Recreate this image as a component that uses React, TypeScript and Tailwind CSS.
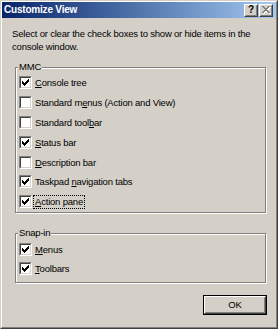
import React from "react";

const font = { fontFamily: '"Liberation Sans", Arial, sans-serif' };

function Check() {
  return (
    <svg width="7" height="7" viewBox="0 0 7 7" shapeRendering="crispEdges" className="block">
      <rect x="6" y="0" width="1" height="1" fill="#000" />
      <rect x="5" y="1" width="2" height="1" fill="#000" />
      <rect x="0" y="2" width="1" height="1" fill="#000" />
      <rect x="4" y="2" width="3" height="1" fill="#000" />
      <rect x="0" y="3" width="2" height="1" fill="#000" />
      <rect x="3" y="3" width="3" height="1" fill="#000" />
      <rect x="0" y="4" width="5" height="1" fill="#000" />
      <rect x="1" y="5" width="3" height="1" fill="#000" />
      <rect x="2" y="6" width="1" height="1" fill="#000" />
    </svg>
  );
}

function Box({ checked }: { checked: boolean }) {
  return (
    <div className="w-[13px] h-[13px] shrink-0 border border-t-[#808080] border-l-[#808080] border-b-white border-r-white">
      <div className="w-[11px] h-[11px] border border-t-[#404040] border-l-[#404040] border-b-[#d4d0c8] border-r-[#d4d0c8] bg-white p-px">
        {checked && <Check />}
      </div>
    </div>
  );
}

type Item = { pre: string; u: string; post: string; checked: boolean; focus?: boolean; mb: number };

function Row({ it }: { it: Item }) {
  return (
    <div className="flex items-center h-[13px]" style={{ marginBottom: it.mb }}>
      <Box checked={it.checked} />
      <span
        className={
          "ml-px px-px inline-block h-[14px] leading-[12px] whitespace-pre text-[9.5px] tracking-[-0.2px] text-black border " +
          (it.focus ? "border-dotted border-black" : "border-transparent")
        }
      >
        {it.pre}
        <span className="underline underline-offset-[1px]">{it.u}</span>
        {it.post}
      </span>
    </div>
  );
}

function Group({
  label,
  items,
  height,
  pt,
  mt,
}: {
  label: string;
  items: Item[];
  height: number;
  pt: number;
  mt: number;
}) {
  return (
    <div
      className="relative ml-[13px] w-[251px] border border-[#808080] shadow-[1px_1px_0_#ffffff,inset_1px_1px_0_#ffffff] pl-[3px]"
      style={{ height, paddingTop: pt, marginTop: mt }}
    >
      <span className="absolute left-[2px] top-[-8px] h-[13px] leading-[13px] px-px bg-[#d4d0c8] text-[9.5px] tracking-[-0.2px] text-black">
        {label}
      </span>
      {items.map((it, i) => (
        <Row key={i} it={it} />
      ))}
    </div>
  );
}

const X_ROWS = [
  [0, 0, 2], [6, 0, 2], [1, 1, 2], [5, 1, 2], [2, 2, 4], [3, 3, 2], [2, 4, 4], [1, 5, 2], [5, 5, 2], [0, 6, 2], [6, 6, 2],
];

export default function App() {
  const mmc: Item[] = [
    { pre: "", u: "C", post: "onsole tree", checked: true, mb: 7 },
    { pre: "Standard m", u: "e", post: "nus (Action and View)", checked: false, mb: 7 },
    { pre: "Standard tool", u: "b", post: "ar", checked: false, mb: 7 },
    { pre: "", u: "S", post: "tatus bar", checked: true, mb: 7 },
    { pre: "", u: "D", post: "escription bar", checked: false, mb: 6 },
    { pre: "Taskpad ", u: "n", post: "avigation tabs", checked: true, mb: 7 },
    { pre: "", u: "A", post: "ction pane", checked: true, focus: true, mb: 0 },
  ];
  const snap: Item[] = [
    { pre: "", u: "M", post: "enus", checked: true, mb: 6 },
    { pre: "", u: "T", post: "oolbars", checked: true, mb: 0 },
  ];
  return (
    <div style={font} className="w-[278px] h-[329px] bg-[#d4d0c8] border border-t-[#d4d0c8] border-l-[#d4d0c8] border-r-[#404040] border-b-[#404040]">
      <div className="w-full h-full border border-t-white border-l-white border-r-[#808080] border-b-[#808080] flex flex-col">
        <div className="h-[16px] flex items-center bg-gradient-to-r from-[#0a246a] to-[#a6caf0] pl-[2px] pr-[3px]">
          <span className="text-white font-bold text-[10px] tracking-[-0.2px] leading-none">Customize View</span>
          <div className="ml-auto flex gap-px">
            <div className="w-[14px] h-[13px] bg-[#d4d0c8] border border-t-white border-l-white border-r-[#404040] border-b-[#404040]">
              <div className="w-full h-full border border-t-[#d4d0c8] border-l-[#d4d0c8] border-r-[#808080] border-b-[#808080] flex items-center justify-center text-[10px] font-bold text-black leading-none">
                ?
              </div>
            </div>
            <div className="w-[14px] h-[13px] bg-[#d4d0c8] border border-t-white border-l-white border-r-[#404040] border-b-[#404040]">
              <div className="w-full h-full border border-t-[#d4d0c8] border-l-[#d4d0c8] border-r-[#808080] border-b-[#808080] flex items-center justify-center">
                <svg width="9" height="8" viewBox="0 0 9 8" shapeRendering="crispEdges" className="block">
                  {X_ROWS.map(([x, y, w], i) => (
                    <rect key={"s" + i} x={x + 1} y={y + 1} width={w} height={1} fill="#ffffff" />
                  ))}
                  {X_ROWS.map(([x, y, w], i) => (
                    <rect key={"g" + i} x={x} y={y} width={w} height={1} fill="#808080" />
                  ))}
                </svg>
              </div>
            </div>
          </div>
        </div>

        <p className="ml-[10px] mt-[9px] w-[250px] text-[9.5px] tracking-[-0.2px] leading-[13px] text-black">
          Select or clear the check boxes to show or hide items in the console window.
        </p>

        <Group label="MMC" items={mmc} height={146} pt={8} mt={14} />
        <Group label="Snap-in" items={snap} height={50} pt={9} mt={20} />

        <div className="mt-[12px] self-end mr-[9px] w-[64px] h-[20px] border border-black">
          <div className="w-full h-full border border-t-white border-l-white border-r-[#404040] border-b-[#404040]">
            <div className="w-full h-full border border-t-[#d4d0c8] border-l-[#d4d0c8] border-r-[#808080] border-b-[#808080] flex items-center justify-center text-[9.5px] tracking-[-0.2px] text-black">
              OK
            </div>
          </div>
        </div>
      </div>
    </div>
  );
}
